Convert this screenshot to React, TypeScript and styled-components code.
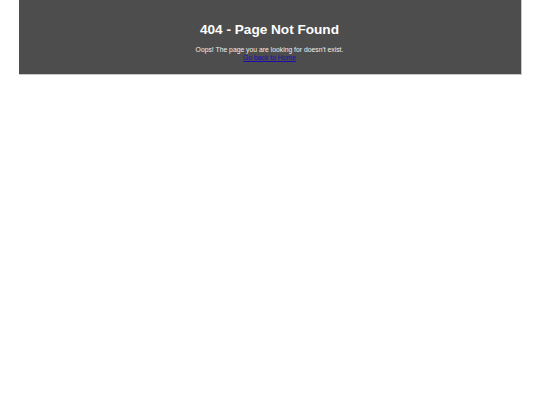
import styled, { createGlobalStyle } from "styled-components";

const GlobalStyle = createGlobalStyle`
  body {
    margin: 0;
    background: #ffffff;
    font-family: "Liberation Sans", Arial, sans-serif;
  }
`;

const Banner = styled.div`
  width: 503px;
  height: 75px;
  margin: 0 auto;
  box-sizing: border-box;
  background-color: #4d4d4d;
  border-right: 1px solid #c8c8c8;
  border-bottom: 1px solid #c8c8c8;
  color: #ffffff;
  display: flex;
  flex-direction: column;
  align-items: center;
  padding-top: 22px;
  text-align: center;
`;

const Title = styled.h1`
  margin: 0 0 8px;
  font-size: 13.6px;
  line-height: 16px;
  font-weight: bold;
`;

const Message = styled.p`
  margin: 0;
  font-size: 6.8px;
  line-height: 8px;
  color: #f0f0f0;
`;

const HomeLink = styled.a`
  font-size: 6.8px;
  line-height: 8px;
  color: #1a0dab;
`;

export default function App() {
  return (
    <>
      <GlobalStyle />
      <Banner>
        <Title>404 - Page Not Found</Title>
        <Message>Oops! The page you are looking for doesn't exist.</Message>
        <HomeLink href="#">Go back to Home</HomeLink>
      </Banner>
    </>
  );
}
